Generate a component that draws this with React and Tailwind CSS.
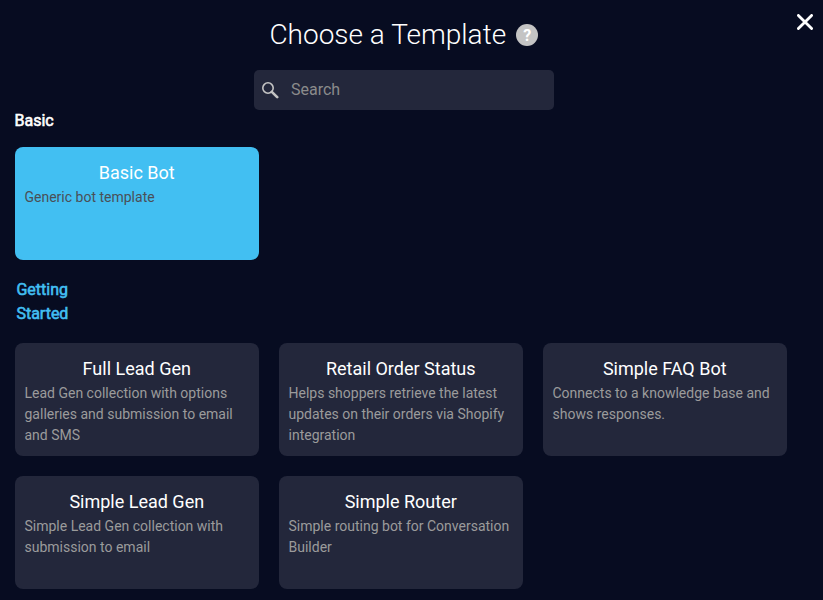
import React from "react";

const starters = [
  { title: "Full Lead Gen", text: "Lead Gen collection with options galleries and submission to email and SMS" },
  { title: "Retail Order Status", text: "Helps shoppers retrieve the latest updates on their orders via Shopify integration" },
  { title: "Simple FAQ Bot", text: "Connects to a knowledge base and shows responses." },
  { title: "Simple Lead Gen", text: "Simple Lead Gen collection with submission to email" },
  { title: "Simple Router", text: "Simple routing bot for Conversation Builder" },
];

function Card({ title, text, selected = false }) {
  return (
    <button
      className={`flex h-[113px] w-[244px] flex-col rounded-lg pr-2.5 pl-[9.5px] pt-3.5 text-left ${
        selected ? "bg-[#42bff2]" : "bg-[#23273b]"
      }`}
    >
      <span className="w-full text-center text-[18px] leading-6 text-white">{title}</span>
      <span
        className={`mt-0.5 block text-[14px] leading-[21px] ${
          selected ? "text-[#4a4f57]" : "text-[#9b9b9b]"
        }`}
      >
        {text}
      </span>
    </button>
  );
}

export default function App() {
  return (
    <main className="relative h-[600px] w-[823px] overflow-hidden bg-[#070c21] font-['Roboto',sans-serif]">
      <button aria-label="Close" className="absolute top-[14px] left-[797px]">
        <svg width="16" height="16" viewBox="0 0 16 16" fill="none" stroke="#fff" strokeWidth="2.8" strokeLinecap="round">
          <path d="M1.4 1.4L14.6 14.6M14.6 1.4L1.4 14.6" />
        </svg>
      </button>

      <header className="flex h-[70px] items-center gap-[10px] pl-[269.4px]">
        <h1 className="text-[28px] leading-10 font-light whitespace-nowrap text-white">Choose a Template</h1>
        <span className="flex size-[22px] items-center justify-center rounded-full bg-[#c4c4c4] pt-0.5 text-[16px] leading-none font-bold text-white">
          ?
        </span>
      </header>

      <div className="ml-[254px] flex h-10 w-[300px] items-center rounded-[5px] bg-[#23273b] pl-2">
        <svg width="17" height="17" viewBox="0 0 17 17" fill="none" stroke="#c4c4c4">
          <circle cx="6" cy="6" r="5.2" strokeWidth="1.6" />
          <path d="M9.8 9.8L15.2 15.2" strokeWidth="2.6" strokeLinecap="round" />
        </svg>
        <input
          placeholder="Search"
          className="ml-3 w-60 bg-transparent text-[16px] text-white outline-none placeholder:text-[#8b8b8b]"
        />
      </div>

      <h2 className="mt-[-1px] ml-[14.5px] text-[16px] leading-6 font-normal text-white [-webkit-text-stroke:0.6px]">Basic</h2>
      <div className="mt-[14px] ml-[15px]">
        <Card title="Basic Bot" text="Generic bot template" selected />
      </div>

      <h2 className="mt-[18px] ml-[16.4px] w-[60px] text-[16px] leading-6 font-normal text-[#42bff2] [-webkit-text-stroke:0.6px]">Getting Started</h2>
      <div className="mt-[17px] ml-[15px] grid w-[772px] grid-cols-3 gap-5">
        {starters.map((item) => (
          <Card key={item.title} {...item} />
        ))}
      </div>
    </main>
  );
}
